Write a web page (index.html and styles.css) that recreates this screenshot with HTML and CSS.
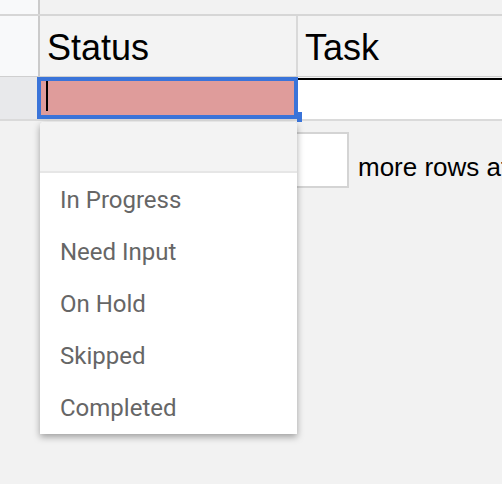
FILE: index.html
```html
<!DOCTYPE html>
<html>
<head>
<meta charset="utf-8">
<link rel="stylesheet" href="styles.css">
</head>
<body>
<div class="sheet">
  <div class="row top-row">
    <div class="rh rh-light"></div>
    <div class="fill"></div>
  </div>
  <div class="row head-row">
    <div class="rh rh-light"></div>
    <div class="hcell status-h">Status</div>
    <div class="hcell task-h">Task</div>
  </div>
  <div class="row data-row">
    <div class="rh-data"></div>
    <div class="edit-cell"><span class="caret"></span></div>
    <div class="task-cell"></div>
    <span class="handle"></span>
  </div>
  <div class="add-row">
    <div class="count-box"></div>
    <div class="add-text">more rows at bottom</div>
  </div>
  <div class="dropdown">
    <div class="dd-search"></div>
    <div class="dd-item">In Progress</div>
    <div class="dd-item">Need Input</div>
    <div class="dd-item">On Hold</div>
    <div class="dd-item">Skipped</div>
    <div class="dd-item">Completed</div>
  </div>
</div>
</body>
</html>
```

FILE: styles.css
```css
html, body {
  margin: 0;
  padding: 0;
}
body {
  width: 502px;
  height: 484px;
  overflow: hidden;
  background: #f2f2f2;
  font-family: "Liberation Sans", Arial, sans-serif;
}
.sheet {
  position: relative;
  width: 502px;
  height: 484px;
  overflow: hidden;
}
.row {
  display: flex;
}
.top-row {
  height: 14px;
  border-bottom: 2px solid #d6d6d6;
}
.rh {
  width: 38px;
  flex: none;
  border-right: 2px solid #cbcbcb;
}
.rh-light {
  background: #f8f9fa;
}
.fill {
  flex: 1;
}
.head-row {
  height: 60px;
  border-bottom: 1px solid #cfcfcf;
}
.hcell {
  font-size: 36px;
  line-height: 36px;
  color: #000;
  padding-top: 14px;
  box-sizing: border-box;
  background: #f3f3f3;
}
.status-h {
  width: 258px;
  padding-left: 7px;
  border-right: 2px solid #d9d9d9;
}
.task-h {
  flex: 1;
  padding-left: 7px;
}
.data-row {
  position: relative;
  height: 42px;
  border-bottom: 2px solid #dadada;
}
.rh-data {
  width: 37px;
  flex: none;
  background: #e8e9eb;
}
.edit-cell {
  position: relative;
  width: 261px;
  height: 42px;
  box-sizing: border-box;
  border: 4px solid #3a74d9;
  background: #df9c9b;
  flex: none;
}
.caret {
  position: absolute;
  left: 5px;
  top: 0;
  width: 2px;
  height: 30px;
  background: #000;
}
.task-cell {
  flex: 1;
  margin-top: 1px;
  border-top: 2px solid #000;
  background: #fff;
}
.handle {
  position: absolute;
  left: 297px;
  top: 35px;
  width: 5px;
  height: 10px;
  background: #3a74d9;
}
.add-row {
  display: flex;
  align-items: flex-start;
  padding-top: 11px;
  padding-left: 240px;
}
.count-box {
  width: 109px;
  height: 56px;
  box-sizing: border-box;
  border: 2px solid #d4d4d4;
  background: #fff;
  flex: none;
}
.add-text {
  margin-top: 22px;
  margin-left: 9px;
  font-size: 26px;
  line-height: 26px;
  color: #000;
  white-space: nowrap;
}
.dropdown {
  position: absolute;
  left: 40px;
  top: 122px;
  width: 257px;
  height: 312px;
  background: #fff;
  border-radius: 4px 4px 0 0;
  box-shadow: 0 3px 7px rgba(0, 0, 0, 0.35);
  overflow: hidden;
}
.dd-search {
  height: 49px;
  background: #f3f3f3;
  border-bottom: 2px solid #e6e6e6;
}
.dd-item {
  height: 52px;
  line-height: 54px;
  padding-left: 20px;
  font-family: Roboto, "Liberation Sans", sans-serif;
  font-size: 24px;
  color: #666;
}
```
